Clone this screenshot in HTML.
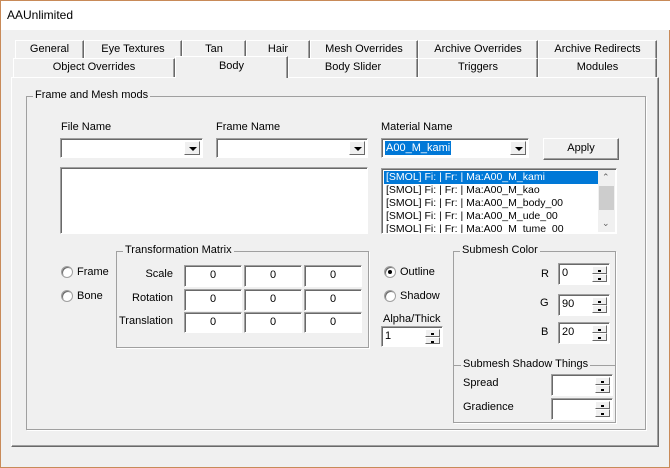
<!DOCTYPE html><html><head><style>
*{box-sizing:border-box}
body{margin:0;width:670px;height:468px;overflow:hidden;font-family:"Liberation Sans",sans-serif;font-size:11px;color:#000;background:#f0f0f0}
.win{position:absolute;left:0;top:0;width:670px;height:468px;border:1px solid #c88a58;border-top:none;background:#f0f0f0}
.title{position:absolute;left:0;top:0;width:670px;height:30px;background:#fff;border-top:1px solid #c88a58}
.title span{position:absolute;left:6px;top:7px;font-size:12px}
.a{position:absolute}
.tab{position:absolute;height:19px;border:1px solid #fff;border-right:1px solid #696969;border-bottom:none;text-align:center;line-height:17px;background:#f0f0f0;box-shadow:inset -1px 0 #a0a0a0}
.panel{position:absolute;left:10px;top:77px;width:648px;height:370px;border:1px solid;border-color:#fff #696969 #696969 #fff;box-shadow:inset -1px -1px #a0a0a0}
.grp{position:absolute;border:1px solid #a0a0a0;box-shadow:1px 1px #fff}
.grp>.lg{position:absolute;left:6px;top:-8px;background:#f0f0f0;padding:0 2px}
.sunk{position:absolute;background:#fff;border:1px solid;border-color:#a0a0a0 #fff #fff #a0a0a0;box-shadow:inset 1px 1px #696969}
.dd{position:absolute;right:2px;top:2px;width:16px;bottom:2px;background:#f0f0f0;border:1px solid;border-color:#fff #696969 #696969 #fff}
.dd:after{content:"";position:absolute;left:4px;top:5px;border-left:4px solid transparent;border-right:4px solid transparent;border-top:4px solid #000}
.btn{position:absolute;border:1px solid;border-color:#fff #696969 #696969 #fff;box-shadow:inset -1px -1px #a0a0a0;text-align:center;background:#f0f0f0}
.cell{text-align:center;line-height:19px}
.spin{position:absolute;right:2px;top:2px;bottom:2px;width:15px}
.spin i{display:block;height:50%;border:1px solid;border-color:#fff #696969 #696969 #fff;background:#f0f0f0;position:relative}
.spin i:after{content:"";position:absolute;left:5px;top:3px;width:3px;height:2px;background:#000}
.rad{position:absolute;width:12px;height:12px;border-radius:50%;background:#fff;border:1px solid #a0a0a0;box-shadow:inset 1px 1px #696969}
.rad.on:after{content:"";position:absolute;left:3px;top:3px;width:4px;height:4px;border-radius:50%;background:#000}
.li{height:13px;line-height:13px;padding-left:2px;white-space:nowrap;font-size:10.5px}
</style></head><body>
<div class="win">
<div class="title"><span>AAUnlimited</span></div>
<div class="panel"></div>
<div class="tab" style="left:14px;top:40px;width:69px">General</div>
<div class="tab" style="left:83px;top:40px;width:98px">Eye Textures</div>
<div class="tab" style="left:181px;top:40px;width:64px">Tan</div>
<div class="tab" style="left:245px;top:40px;width:64px">Hair</div>
<div class="tab" style="left:309px;top:40px;width:108px">Mesh Overrides</div>
<div class="tab" style="left:417px;top:40px;width:120px">Archive Overrides</div>
<div class="tab" style="left:537px;top:40px;width:119px">Archive Redirects</div>
<div class="tab" style="left:12px;top:58px;width:162px">Object Overrides</div>
<div class="tab" style="left:287px;top:58px;width:130px">Body Slider</div>
<div class="tab" style="left:417px;top:58px;width:120px">Triggers</div>
<div class="tab" style="left:537px;top:58px;width:119px">Modules</div>
<div class="tab" style="left:174px;top:56px;width:113px;height:22px;border-bottom:none;z-index:2;line-height:19px">Body</div>

<div class="grp" style="left:25px;top:96px;width:620px;height:334px"><span class="lg">Frame and Mesh mods</span></div>
<div class="a" style="left:60px;top:121px">File Name</div>
<div class="a" style="left:215px;top:121px">Frame Name</div>
<div class="a" style="left:380px;top:121px">Material Name</div>
<div class="sunk" style="left:59px;top:138px;width:143px;height:20px"><div class="dd"></div></div>
<div class="sunk" style="left:215px;top:138px;width:152px;height:20px"><div class="dd"></div></div>
<div class="sunk" style="left:380px;top:138px;width:148px;height:20px"><span style="position:absolute;left:3px;top:2px;background:#0078d7;color:#fff;padding:0 1px;line-height:14px">A00_M_kami</span><div class="dd"></div></div>
<div class="btn" style="left:542px;top:138px;width:76px;height:22px;line-height:19px">Apply</div>
<div class="sunk" style="left:59px;top:167px;width:308px;height:67px"></div>
<div class="sunk" style="left:380px;top:168px;width:236px;height:66px;overflow:hidden;padding:2px">
<div class="li" style="background:#0078d7;color:#fff;width:215px">[SMOL] Fi: | Fr: | Ma:A00_M_kami</div>
<div class="li">[SMOL] Fi: | Fr: | Ma:A00_M_kao</div>
<div class="li">[SMOL] Fi: | Fr: | Ma:A00_M_body_00</div>
<div class="li">[SMOL] Fi: | Fr: | Ma:A00_M_ude_00</div>
<div class="li">[SMOL] Fi: | Fr: | Ma:A00_M_tume_00</div>
<div class="a" style="left:216px;top:1px;width:17px;height:62px;background:#f0f0f0">
<div class="a" style="left:1px;top:16px;width:15px;height:24px;background:#cdcdcd"></div>
<div class="a" style="left:4px;top:2px;font-size:9px;color:#606060">&#8963;</div>
<div class="a" style="left:4px;top:48px;font-size:9px;color:#606060">&#8964;</div></div>
</div>

<div class="rad" style="left:60px;top:266px"></div><div class="a" style="left:76px;top:266px">Frame</div>
<div class="rad" style="left:60px;top:290px"></div><div class="a" style="left:76px;top:290px">Bone</div>

<div class="grp" style="left:115px;top:251px;width:253px;height:97px"><span class="lg">Transformation Matrix</span></div>
<div class="a" style="left:120px;top:268px;width:52px;text-align:right">Scale</div>
<div class="a" style="left:110px;top:292px;width:62px;text-align:right">Rotation</div>
<div class="a" style="left:110px;top:315px;width:62px;text-align:right">Translation</div>
<div class="sunk cell" style="left:183px;top:265px;width:58px;height:22px">0</div>
<div class="sunk cell" style="left:243px;top:265px;width:58px;height:22px">0</div>
<div class="sunk cell" style="left:303px;top:265px;width:58px;height:22px">0</div>
<div class="sunk cell" style="left:183px;top:289px;width:58px;height:22px">0</div>
<div class="sunk cell" style="left:243px;top:289px;width:58px;height:22px">0</div>
<div class="sunk cell" style="left:303px;top:289px;width:58px;height:22px">0</div>
<div class="sunk cell" style="left:183px;top:312px;width:58px;height:21px">0</div>
<div class="sunk cell" style="left:243px;top:312px;width:58px;height:21px">0</div>
<div class="sunk cell" style="left:303px;top:312px;width:58px;height:21px">0</div>

<div class="rad on" style="left:383px;top:266px"></div><div class="a" style="left:399px;top:266px">Outline</div>
<div class="rad" style="left:383px;top:290px"></div><div class="a" style="left:399px;top:290px">Shadow</div>
<div class="a" style="left:382px;top:313px">Alpha/Thick</div>
<div class="sunk" style="left:380px;top:326px;width:62px;height:21px"><span class="a" style="left:3px;top:3px">1</span><div class="spin"><i></i><i></i></div></div>

<div class="grp" style="left:452px;top:251px;width:163px;height:172px"><span class="lg">Submesh Color</span></div>
<div class="a" style="left:540px;top:268px">R</div>
<div class="a" style="left:539px;top:297px">G</div>
<div class="a" style="left:540px;top:326px">B</div>
<div class="sunk" style="left:557px;top:263px;width:52px;height:22px"><span class="a" style="left:3px;top:3px">0</span><div class="spin"><i></i><i></i></div></div>
<div class="sunk" style="left:557px;top:294px;width:52px;height:22px"><span class="a" style="left:3px;top:3px">90</span><div class="spin"><i></i><i></i></div></div>
<div class="sunk" style="left:557px;top:322px;width:52px;height:22px"><span class="a" style="left:3px;top:3px">20</span><div class="spin"><i></i><i></i></div></div>
<div class="a" style="left:453px;top:365px;width:161px;height:1px;background:#a0a0a0"></div>
<div class="a" style="left:460px;top:358px;background:#f0f0f0;padding:0 2px">Submesh Shadow Things</div>
<div class="a" style="left:462px;top:377px">Spread</div>
<div class="a" style="left:462px;top:401px">Gradience</div>
<div class="sunk" style="left:550px;top:374px;width:62px;height:22px"><div class="spin"><i></i><i></i></div></div>
<div class="sunk" style="left:550px;top:398px;width:62px;height:22px"><div class="spin"><i></i><i></i></div></div>
</div>
</body></html>
